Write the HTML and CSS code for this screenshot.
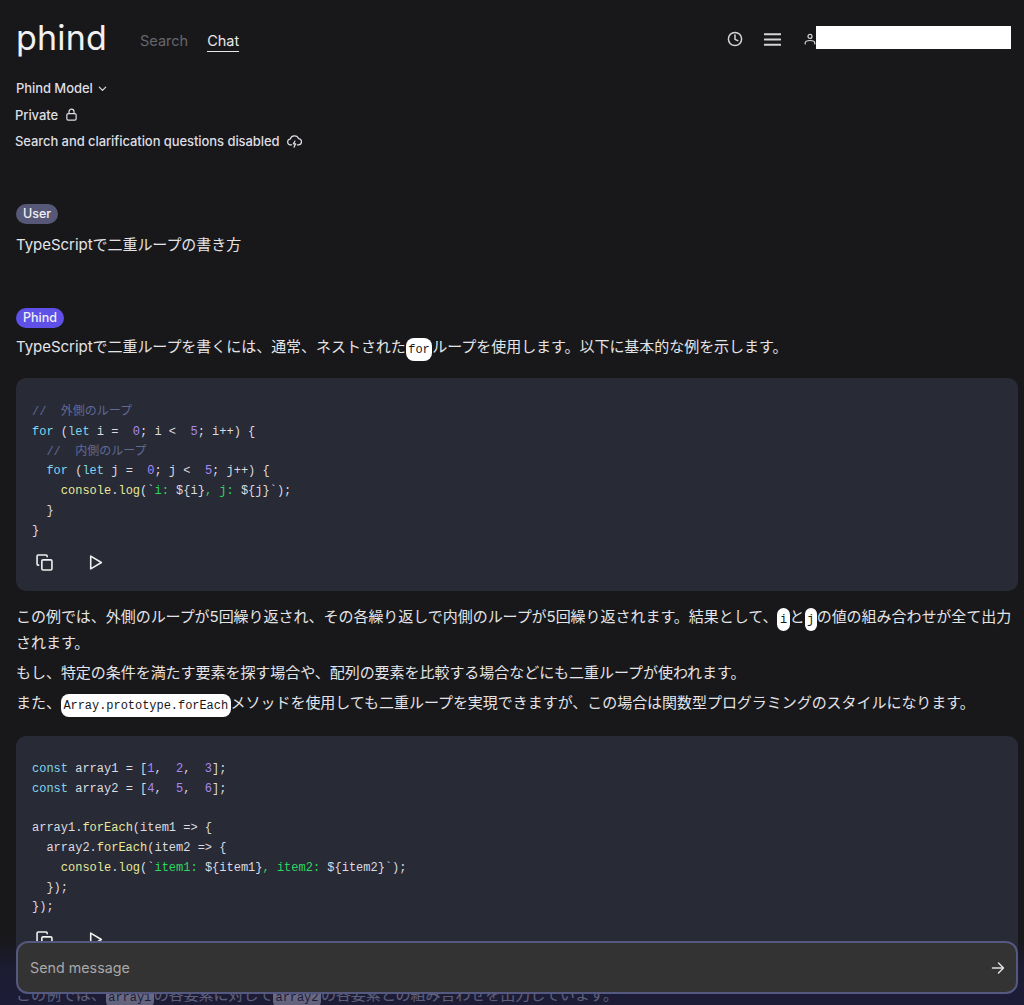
FILE: index.html
```html
<!DOCTYPE html>
<html lang="ja">
<head>
<meta charset="utf-8">
<title>Phind</title>
<link rel="stylesheet" href="styles.css">
</head>
<body>
<div class="page">
  <header class="topbar">
    <div class="nav-left">
      <span class="logo">phind</span>
      <a class="nav-link">Search</a>
      <a class="nav-link active">Chat</a>
    </div>
    <div class="nav-right">
      <svg class="icon-clock" viewBox="0 0 16 16" width="16" height="16"><circle cx="8" cy="8" r="6.6"/><path d="M8 4v4.3l2.8 1.4"/></svg>
      <svg class="icon-menu" viewBox="0 0 16 16" width="17" height="17"><path d="M0.5 3h15M0.5 8h15M0.5 13h15"/></svg>
      <div class="user">
        <svg class="icon-user" viewBox="0 0 12 12" width="12" height="12"><circle cx="6" cy="3.4" r="2"/><path d="M1.2 11v-.8c0-1.8 1.5-2.7 4.8-2.7s4.800.9 4.800 2.700v.8"/></svg>
        <div class="user-name"></div>
      </div>
    </div>
  </header>

  <section class="meta">
    <div class="meta-row model">Phind Model
      <svg class="icon-sm" viewBox="0 0 12 12" width="11" height="11"><path d="M2.500 4.500 6 8l3.500-3.500"/></svg>
    </div>
    <div class="meta-row private">Private
      <svg class="icon-sm" viewBox="0 0 14 14" width="13" height="13"><rect x="2" y="6" width="10" height="7" rx="1.500"/><path d="M4.300 6V4a2.700 2.700 0 0 1 5.400 0v2"/></svg>
    </div>
    <div class="meta-row search">Search and clarification questions disabled
      <svg class="icon-sm" viewBox="0 0 16 16" width="15" height="15"><path d="M5 11.500H4a3 3 0 0 1-.5-6 4.600 4.600 0 0 1 8.800-.6A3.200 3.200 0 0 1 12 11.500h-1"/><path d="M8.500 7.500 6.800 10.500h2.400L7.500 14"/></svg>
    </div>
  </section>

  <main class="chat">
    <div class="message user-message">
      <span class="badge badge-user">User</span>
      <p class="text">TypeScriptで二重ループの書き方</p>
    </div>

    <div class="message phind-message">
      <span class="badge badge-phind">Phind</span>
      <p class="text">TypeScriptで二重ループを書くには、通常、ネストされた<code class="inline">for</code>ループを使用します。以下に基本的な例を示します。</p>

      <div class="code-block first">
<pre><span class="c">//  外側のループ</span>
<span class="k">for</span> (<span class="k">let</span> i =  <span class="n">0</span>; i &lt;  <span class="n">5</span>; i++) {
  <span class="c">//  内側のループ</span>
  <span class="k">for</span> (<span class="k">let</span> j =  <span class="n">0</span>; j &lt;  <span class="n">5</span>; j++) {
    <span class="f">console</span>.<span class="f">log</span>(`<span class="s">i: </span>${i}<span class="s">, j: </span>${j}`);
  }
}</pre>
        <div class="code-actions">
          <svg class="icon-action" viewBox="0 0 16 16" width="17" height="17"><rect x="5.500" y="5.500" width="9.500" height="9.500" rx="1.200"/><path d="M10.500 2.500V2a1 1 0 0 0-1-1H2a1 1 0 0 0-1 1v7.500a1 1 0 0 0 1 1h.5"/></svg>
          <svg class="icon-action" viewBox="0 0 16 16" width="17" height="17"><path d="M3.500 2 13.500 8l-10 6z"/></svg>
        </div>
      </div>

      <p class="text para-a">この例では、外側のループが5回繰り返され、その各繰り返しで内側のループが5回繰り返されます。結果として、<code class="inline">i</code>と<code class="inline">j</code>の値の組み合わせが全て出力されます。</p>
      <p class="text para-b">もし、特定の条件を満たす要素を探す場合や、配列の要素を比較する場合などにも二重ループが使われます。</p>
      <p class="text para-b">また、<code class="inline">Array.prototype.forEach</code>メソッドを使用しても二重ループを実現できますが、この場合は関数型プログラミングのスタイルになります。</p>

      <div class="code-block second">
<pre><span class="k">const</span> array1 = [<span class="n">1</span>,  <span class="n">2</span>,  <span class="n">3</span>];
<span class="k">const</span> array2 = [<span class="n">4</span>,  <span class="n">5</span>,  <span class="n">6</span>];

array1.<span class="f">forEach</span>(item1 =&gt; {
  array2.<span class="f">forEach</span>(item2 =&gt; {
    <span class="f">console</span>.<span class="f">log</span>(`<span class="s">item1: </span>${item1}<span class="s">, item2: </span>${item2}`);
  });
});</pre>
        <div class="code-actions">
          <svg class="icon-action" viewBox="0 0 16 16" width="17" height="17"><rect x="5.500" y="5.500" width="9.500" height="9.500" rx="1.200"/><path d="M10.500 2.500V2a1 1 0 0 0-1-1H2a1 1 0 0 0-1 1v7.500a1 1 0 0 0 1 1h.5"/></svg>
          <svg class="icon-action" viewBox="0 0 16 16" width="17" height="17"><path d="M3.500 2 13.500 8l-10 6z"/></svg>
        </div>
      </div>

      <p class="text para-last">この例では、<code class="inline">array1</code>の各要素に対して<code class="inline">array2</code>の各要素との組み合わせを出力しています。</p>
    </div>
  </main>

  <div class="composer-wrap">
    <div class="composer">
      <span class="placeholder">Send message</span>
      <svg class="icon-send" viewBox="0 0 14 14" width="14" height="14"><path d="M1.500 7h11M7.500 2l5 5-5 5"/></svg>
    </div>
  </div>
</div>
</body>
</html>
```
FILE: styles.css
```css
* { box-sizing: border-box; }
html, body { margin: 0; padding: 0; height: 100%; overflow: hidden; }
body {
  background: #18181b;
  color: #e4e4e7;
  font-family: Inter, "Noto Sans CJK JP", sans-serif;
}
.page { position: relative; height: 1005px; overflow: hidden; }

.topbar {
  display: flex;
  justify-content: space-between;
  align-items: center;
  height: 78px;
  padding: 4px 13px 0 16px;
}
.nav-left { display: flex; align-items: center; }
.logo {
  font-family: Inter, sans-serif;
  font-size: 34px;
  line-height: 40px;
  color: #f1f1f1;
  letter-spacing: .2px;
  width: 124px;
  margin-top: -6px;
}
.nav-link { font-size: 14.500px; color: #66666c; margin-right: 19px; padding-bottom: 2px; margin-top: 2px; border-bottom: 1.500px solid transparent; }
.nav-link.active { color: #e8e8e8; border-bottom-color: #e8e8e8; }
.nav-right { display: flex; align-items: center; margin-top: -4px; }
.nav-right svg { fill: none; stroke: #d4d4d8; stroke-width: 1.500; stroke-linecap: round; stroke-linejoin: round; }
.icon-menu { margin-left: 21px; stroke-width: 1.800 !important; }
.user { display: flex; align-items: center; margin-left: 23px; }
.icon-user { stroke-width: 1.200 !important; margin-top: -1px; }
.user-name { width: 195px; height: 23px; margin-top: -3px; background: #fff; }

.meta { display: flex; flex-direction: column; padding-left: 15px; font-size: 13px; font-weight: 500; color: #dedee3; }
.meta-row { display: flex; align-items: center; gap: 7px; height: 26.500px; letter-spacing: -.07px; }
.meta-row.model { padding-left: 1px; gap: 4px; height: 20px; margin-bottom: 3.500px; }
.icon-sm { fill: none; stroke: #dedee3; stroke-width: 1.300; stroke-linecap: round; stroke-linejoin: round; }

.chat { padding: 0 6px 0 16px; margin-top: 49px; }
.message { display: flex; flex-direction: column; align-items: flex-start; }
.user-message { height: 104px; }
.badge {
  display: inline-flex;
  align-items: center;
  height: 20.500px;
  padding: 0 7px;
  border-radius: 11px;
  color: #f0f0f5;
  font-size: 12.500px;
  font-weight: 500;
}
.badge-user { background: #575877; }
.badge-phind { background: #5f51e8; }
.text { margin: 0; font-size: 15px; line-height: 24px; color: #e4e4e7; letter-spacing: -.04px; }
.user-message .text { margin-top: 8.500px; }
.phind-message > .text:first-of-type { margin-top: 7px; }
.inline {
  font-family: "Liberation Mono", monospace;
  font-size: 12px;
  background: #fff;
  color: #18181b;
  padding: 4.500px 2.500px;
  border-radius: 8px;
}
.code-block {
  align-self: stretch;
  background: #282a36;
  border-radius: 10px;
  padding: 25px 16px 0;
}
.code-block.first { margin-top: 17px; height: 213px; }
.code-block.second { margin-top: 19px; height: 233px; padding-top: 24px; }
pre {
  margin: 0;
  font-family: "Liberation Mono", "Noto Sans CJK JP", monospace;
  font-size: 12px;
  line-height: 19.750px;
  color: #dcdce0;
}
.c { color: #5f6a96; }
.k { color: #7fd6ee; }
.n { color: #a98bf5; }
.f { color: #e6e89a; }
.s { color: #2bd85f; }
.code-actions { display: flex; gap: 34px; margin-top: 13px; padding-left: 4px; }
.icon-action { fill: none; stroke: #f0f0f0; stroke-width: 1.500; stroke-linejoin: round; stroke-linecap: round; }

.para-a { margin-top: 14px; }
.para-b { margin-top: 6px; }
.para-last { margin-top: 14px; }

.composer-wrap {
  position: absolute;
  left: 0;
  right: 0;
  bottom: 0;
  height: 64px;
  padding: 0 6px 11px 16px;
  background: linear-gradient(to bottom, rgba(30,30,68,0) 0%, rgba(30,30,68,.55) 40%, rgba(30,30,68,.7) 100%);
}
.composer {
  display: flex;
  align-items: center;
  justify-content: space-between;
  height: 53px;
  padding: 0 11px 0 12px;
  background: #333333;
  border: 2px solid #55587f;
  border-radius: 12px;
}
.placeholder { font-size: 14.300px; color: #a8a8a8; }
.icon-send { fill: none; stroke: #e0e0e0; stroke-width: 1.500; stroke-linecap: round; stroke-linejoin: round; }
```
